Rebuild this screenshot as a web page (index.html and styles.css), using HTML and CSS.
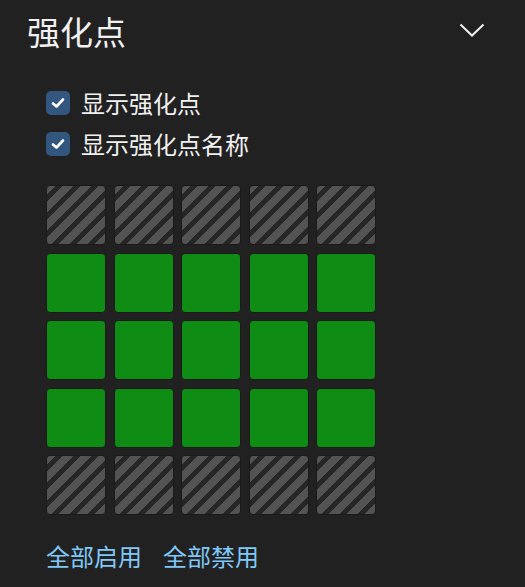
FILE: index.html
```html
<!DOCTYPE html>
<html lang="zh">
<head>
<meta charset="utf-8">
<link rel="stylesheet" href="styles.css">
</head>
<body>
<div class="panel">
  <div class="header">
    <h1 class="title">强化点</h1>
    <svg class="chevron" width="26" height="16" viewBox="0 0 26 16"><path d="M1.5 2.5 L13 13.5 L24.5 2.5" fill="none" stroke="#f0f0f0" stroke-width="2"/></svg>
  </div>
  <div class="body">
    <label class="check"><span class="box"><svg width="14" height="12" viewBox="0 0 14 12"><path d="M2 6.5 L5.5 9.5 L12 2.5" fill="none" stroke="#fff" stroke-width="2.6" stroke-linecap="round" stroke-linejoin="round"/></svg></span><span class="label">显示强化点</span></label>
    <label class="check"><span class="box"><svg width="14" height="12" viewBox="0 0 14 12"><path d="M2 6.5 L5.5 9.5 L12 2.5" fill="none" stroke="#fff" stroke-width="2.6" stroke-linecap="round" stroke-linejoin="round"/></svg></span><span class="label">显示强化点名称</span></label>
    <div class="grid">
      <div class="cell off"></div><div class="cell off"></div><div class="cell off"></div><div class="cell off"></div><div class="cell off"></div>
      <div class="cell on"></div><div class="cell on"></div><div class="cell on"></div><div class="cell on"></div><div class="cell on"></div>
      <div class="cell on"></div><div class="cell on"></div><div class="cell on"></div><div class="cell on"></div><div class="cell on"></div>
      <div class="cell on"></div><div class="cell on"></div><div class="cell on"></div><div class="cell on"></div><div class="cell on"></div>
      <div class="cell off"></div><div class="cell off"></div><div class="cell off"></div><div class="cell off"></div><div class="cell off"></div>
    </div>
    <div class="links">
      <a class="link">全部启用</a>
      <a class="link">全部禁用</a>
    </div>
  </div>
</div>
</body>
</html>
```
FILE: styles.css
```css
html, body {
  margin: 0;
  padding: 0;
  background: #212121;
  height: 100%;
}
body {
  font-family: "Noto Sans CJK SC", "Noto Sans", sans-serif;
  color: #eeeeee;
}
.panel {
  width: 525px;
  height: 587px;
  box-sizing: border-box;
}
.header {
  display: flex;
  align-items: center;
  justify-content: space-between;
  padding: 9px 40px 0 27px;
  height: 44px;
}
.title {
  margin: 0;
  font-size: 33px;
  font-weight: 400;
  line-height: 44px;
  color: #f0f0f0;
}
.chevron {
  display: block;
  margin-top: -2px;
}
.body {
  padding: 35px 0 0 46px;
}
.check {
  display: flex;
  align-items: center;
  gap: 11px;
  height: 30px;
  margin-bottom: 11px;
}
.box {
  width: 24px;
  height: 24px;
  border-radius: 5px;
  background: #32567e;
  display: flex;
  align-items: center;
  justify-content: center;
}
.label {
  font-size: 24px;
  line-height: 30px;
  color: #f0f0f0;
}
.grid {
  display: grid;
  grid-template-columns: repeat(5, 60px);
  grid-auto-rows: 60px;
  gap: 7.6px;
  margin-top: 26px;
}
.cell {
  border-radius: 4px;
  box-sizing: border-box;
  border: 1px solid #1a1a1a;
}
.cell.on {
  background: #0f8c13;
}
.cell.off {
  background: repeating-linear-gradient(-45deg, #535353 0 7.5px, #262626 7.5px 12.7px);
}
.links {
  display: flex;
  gap: 21px;
  margin-top: 24px;
}
.link {
  font-size: 24px;
  line-height: 34px;
  color: #7fc8f8;
  cursor: pointer;
}
```
